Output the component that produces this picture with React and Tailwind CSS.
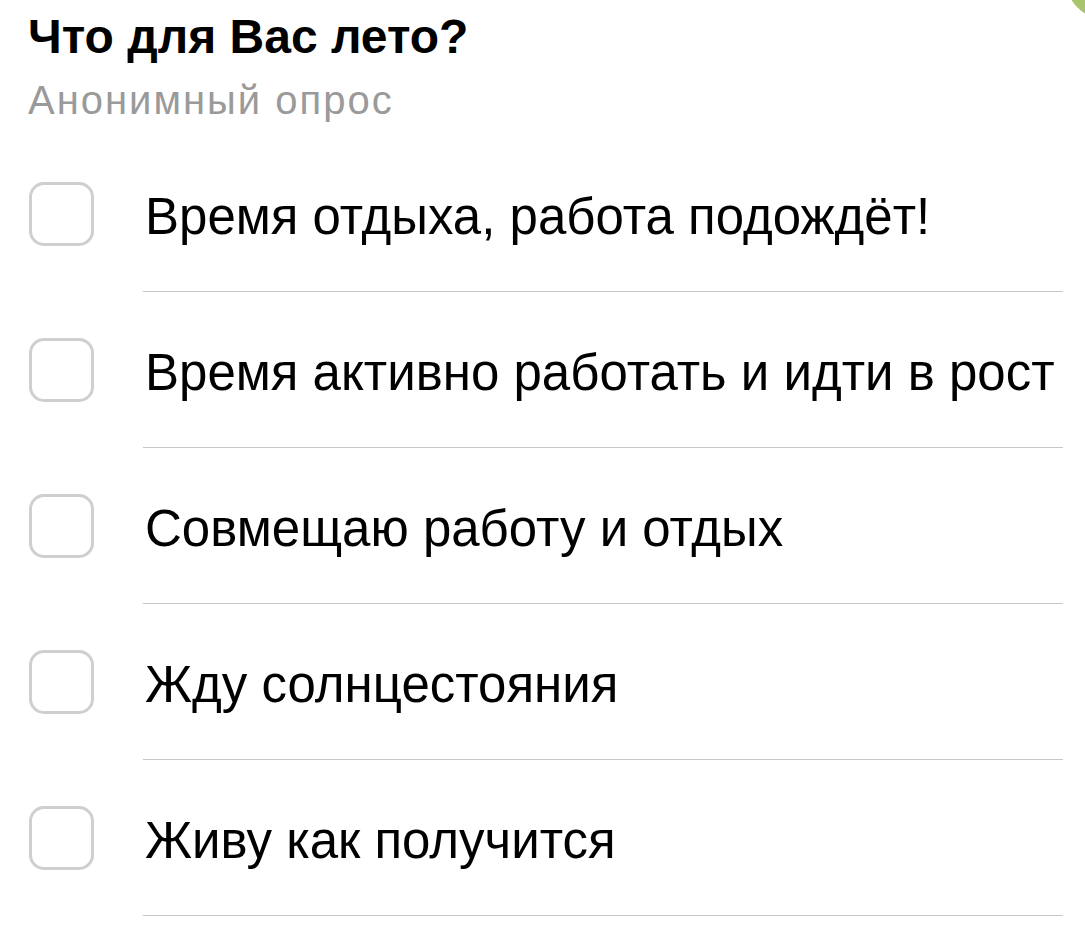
import React from "react";

const options = [
  "Время отдыха, работа подождёт!",
  "Время активно работать и идти в рост",
  "Совмещаю работу и отдых",
  "Жду солнцестояния",
  "Живу как получится",
];

function Option({ label }) {
  return (
    <div className="flex h-[156px]">
      <div className="flex items-center pl-[29px] pr-[49px] pb-px">
        <div className="w-[65px] h-[64px] rounded-[15px] border-[3px] border-[#cfcfcf] bg-white" />
      </div>
      <div className="flex-1 flex items-center border-b-[1.5px] border-[#c8c8c8] mr-[22px]">
        <span className="mt-[6px] pl-[2px] text-[51px] leading-[58px] text-black whitespace-nowrap">{label}</span>
      </div>
    </div>
  );
}

export default function App() {
  return (
    <div
      className="relative w-[1085px] h-[929px] overflow-hidden bg-white"
      style={{ fontFamily: '"Liberation Sans", Arial, sans-serif' }}
    >
      <div className="absolute left-[1066px] top-[-59px] w-[78px] h-[78px] rounded-full bg-[#a9c46c]" />
      <div className="px-[28px] pt-[9px]">
        <h1 className="text-[48px] leading-[56px] font-bold text-black">Что для Вас лето?</h1>
        <p className="mt-[11px] text-[40px] leading-[48px] tracking-[2px] text-[#9a9a9a]">Анонимный опрос</p>
      </div>
      <div className="mt-[12px]">
        {options.map((o) => (
          <Option key={o} label={o} />
        ))}
      </div>
    </div>
  );
}
